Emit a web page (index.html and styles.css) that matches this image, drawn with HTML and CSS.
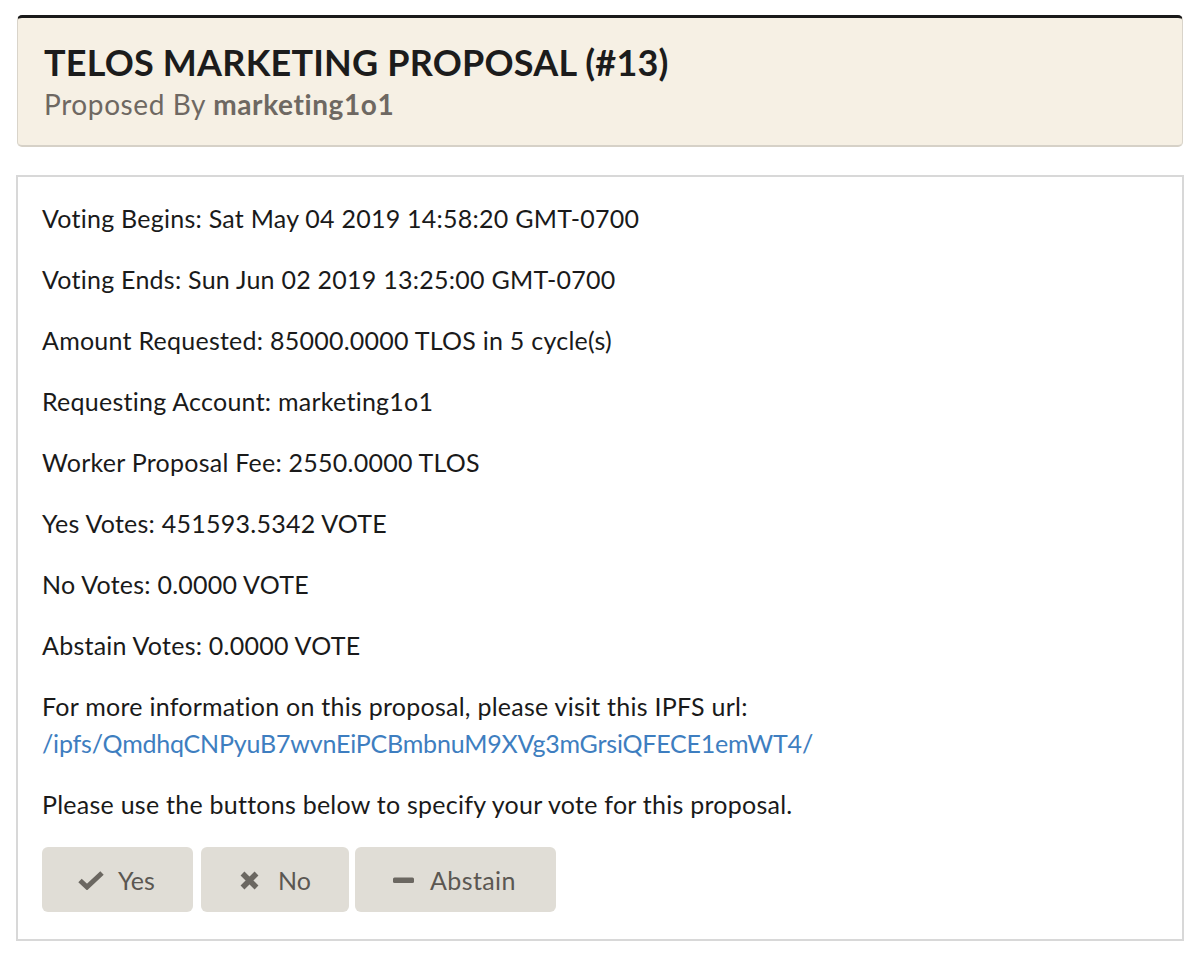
FILE: index.html
```html
<!DOCTYPE html>
<html>
<head>
<meta charset="utf-8">
<link rel="stylesheet" href="styles.css">
</head>
<body>
<div class="page">
  <div class="header">
    <h1 class="title">TELOS MARKETING PROPOSAL (#13)</h1>
    <div class="sub">Proposed By <span class="who">marketing1o1</span></div>
  </div>
  <div class="content">
    <p><span class="lbl">Voting Begins:</span> Sat May 04 2019 14:58:20 GMT-0700</p>
    <p><span class="lbl">Voting Ends:</span> Sun Jun 02 2019 13:25:00 GMT-0700</p>
    <p><span class="lbl">Amount Requested:</span> 85000.0000 TLOS in 5 cycle(s)</p>
    <p><span class="lbl">Requesting Account:</span> marketing1o1</p>
    <p><span class="lbl">Worker Proposal Fee:</span> 2550.0000 TLOS</p>
    <p><span class="lbl">Yes Votes:</span> 451593.5342 VOTE</p>
    <p><span class="lbl">No Votes:</span> 0.0000 VOTE</p>
    <p><span class="lbl">Abstain Votes:</span> 0.0000 VOTE</p>
    <p>For more information on this proposal, please visit this IPFS url:<br><a class="link" href="#">/ipfs/QmdhqCNPyuB7wvnEiPCBmbnuM9XVg3mGrsiQFECE1emWT4/</a></p>
    <p>Please use the buttons below to specify your vote for this proposal.</p>
    <div class="buttons">
      <button class="btn btn-yes">
        <svg class="ico" width="26" height="20" viewBox="0 0 26 20"><path d="M2 10.5 L9 17 L24 3" fill="none" stroke="#6b6761" stroke-width="5" stroke-linejoin="miter"/></svg>
        <span>Yes</span>
      </button>
      <button class="btn btn-no">
        <svg class="ico" width="19" height="20" viewBox="0 0 19 20"><path d="M2.5 3.5 L16.5 17.5 M16.5 3.5 L2.5 17.5" fill="none" stroke="#6b6761" stroke-width="5.5"/></svg>
        <span>No</span>
      </button>
      <button class="btn btn-abs">
        <svg class="ico" width="21" height="20" viewBox="0 0 21 20"><rect x="0" y="7.5" width="21" height="5.5" rx="1.5" fill="#6b6761"/></svg>
        <span>Abstain</span>
      </button>
    </div>
  </div>
</div>
</body>
</html>
```
FILE: styles.css
```css
html, body {
  margin: 0;
  padding: 0;
  background: #ffffff;
}
body {
  font-family: Lato, "Liberation Sans", sans-serif;
  color: #1a1a1a;
}
.page {
  padding: 15px 16px 0 16px;
  display: flex;
  flex-direction: column;
  gap: 28px;
}
.header {
  margin: 0 1px;
  background: #f6f0e4;
  border-top: 3px solid #1a1a1a;
  border-left: 1px solid #d9d4ca;
  border-right: 1px solid #d9d4ca;
  border-bottom: 2px solid #d6d1c7;
  border-radius: 5px;
  padding: 23px 26px 24px 26px;
}
.title {
  margin: 0;
  font-size: 36px;
  line-height: 43px;
  font-weight: 700;
  letter-spacing: 0.2px;
  color: #1c1c1c;
}
.sub {
  margin-top: 4px;
  font-size: 28px;
  line-height: 33px;
  letter-spacing: 0.6px;
  color: #6e6862;
}
.who {
  font-weight: 700;
}
.content {
  border: 2px solid #d8d8d8;
  padding: 23px 24px 26px 24px;
  height: 766px;
  box-sizing: border-box;
}
.content p {
  margin: 0 0 24px 0;
  font-size: 25px;
  line-height: 37px;
  letter-spacing: 0.25px;
  color: #1a1a1a;
}
.link {
  color: #3e7ec0;
  text-decoration: none;
  letter-spacing: -0.2px;
}
.buttons {
  display: flex;
  gap: 8px;
  margin-top: 13px;
}
.btn {
  display: flex;
  align-items: center;
  height: 65px;
  border: none;
  border-radius: 6px;
  background: #e0ddd6;
  font-family: Lato, "Liberation Sans", sans-serif;
  font-size: 25px;
  color: #5b5752;
}
.btn-yes {
  gap: 14px;
  padding: 0 38px 0 36px;
  width: 151px;
}
.btn-no {
  gap: 19px;
  padding: 0 38px 0 39px;
  width: 148px;
}
.btn-abs {
  gap: 16px;
  padding: 0 38px 0 38px;
  width: 201px;
  margin-left: -2px;
  letter-spacing: 0.4px;
}
.ico {
  display: block;
  flex: none;
}
```
